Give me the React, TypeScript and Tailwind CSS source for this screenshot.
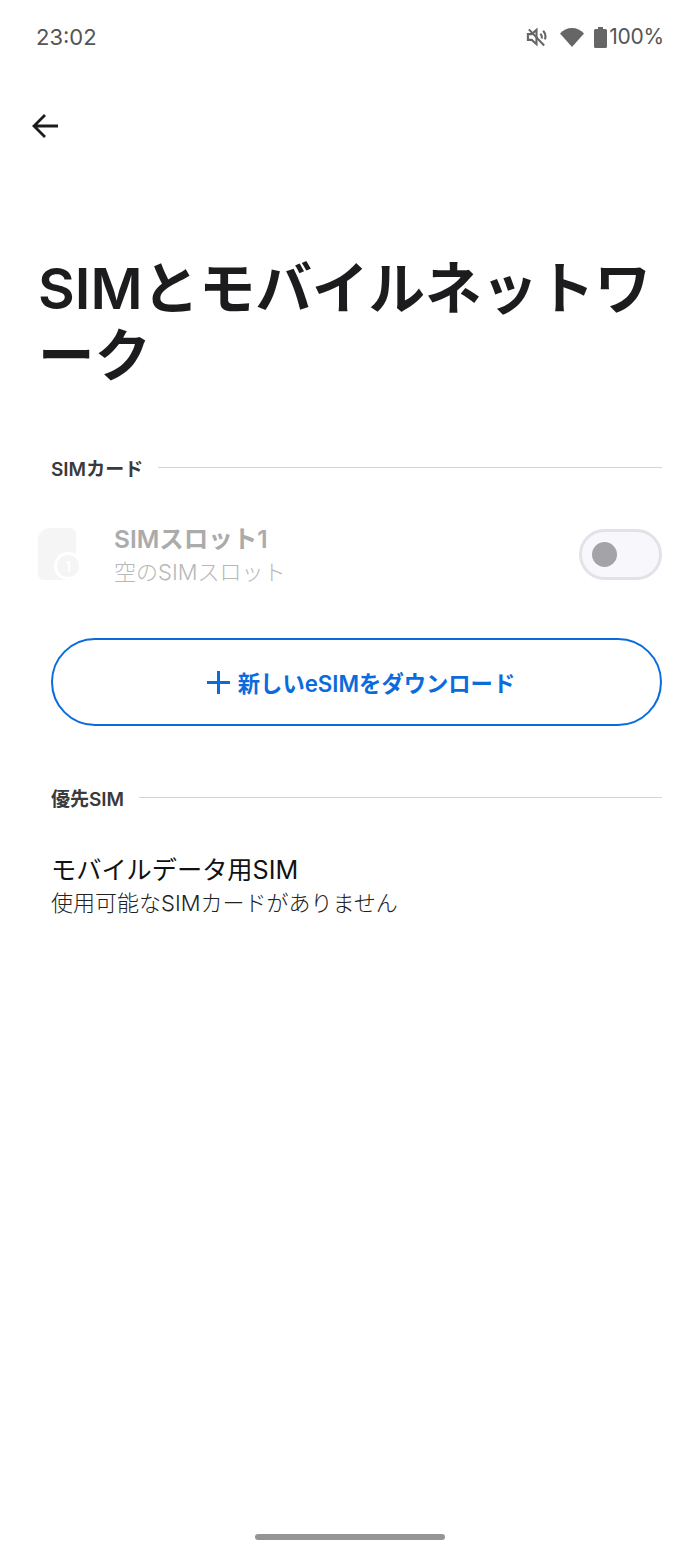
const jp = "font-['Inter','Noto_Sans_CJK_JP',sans-serif]";

function SectionHeader({ label }: { label: string }) {
  return (
    <div className="flex items-center gap-[15px] pl-[51px] pr-[38px] h-[24px]">
      <span className="text-[19px] leading-[24px] font-semibold text-[#3a3a3c] whitespace-nowrap translate-y-[1px]">{label}</span>
      <div className="flex-1 h-px bg-[#d4d4d6] -mt-[4px]" />
    </div>
  );
}

export default function App() {
  return (
    <div className={`${jp} relative w-[700px] h-[1556px] bg-white overflow-hidden`}>
      {/* status bar */}
      <div className="flex items-center justify-between pl-[36px] pr-[36px] h-[74px]">
        <span className="text-[22px] text-[#555]">23:02</span>
        <div className="flex items-center">
          <svg width="21" height="22" viewBox="0 0 22 22" fill="none" stroke="#666" strokeWidth="2.2">
            <path d="M2 8v6h4l5 4.500V3.500L6 8z" fill="#fff" />
            <path d="M15 7.500a5 5 0 0 1 1.400 5M18 4.500a9 9 0 0 1 1.800 9" />
            <path d="M3 3l16 17" />
          </svg>
          <svg className="ml-[13px]" width="24" height="20" viewBox="0 0 24 20">
            <path d="M0 6.500C3 3 7.500 1 12 1s9 2 12 5.500L12 20z" fill="#666" />
          </svg>
          <svg className="ml-[10px]" width="13" height="21" viewBox="0 0 13 21">
            <path d="M4 0h5v2h2.500A1.500 1.500 0 0 1 13 3.500V19.500A1.500 1.500 0 0 1 11.500 21h-10A1.500 1.500 0 0 1 0 19.500V3.500A1.500 1.500 0 0 1 1.500 2H4z" fill="#666" />
          </svg>
          <span className="ml-[2px] text-[21px] text-[#555] tracking-[-0.2px]">100%</span>
        </div>
      </div>

      {/* back */}
      <div className="pl-[32px] pt-[39px] h-[100px]">
        <svg width="26" height="26" viewBox="0 0 26 26" fill="none" stroke="#1c1c1e" strokeWidth="2.800">
          <path d="M26 13H2M13 2L2 13l11 11" />
        </svg>
      </div>

      <h1 className="pl-[38px] pr-[30px] mt-[81px] text-[56.500px] leading-[67px] font-semibold text-[#1c1c1e]">
        SIMとモバイルネットワーク
      </h1>

      <div className="mt-[68px]">
        <SectionHeader label="SIMカード" />
      </div>

      {/* sim slot row */}
      <div className="flex items-center pl-[38px] pr-[38px] mt-[47px] h-[52px]">
        <div className="relative w-[42px] h-[52px]">
          <div className="w-[38px] h-[52px] bg-[#f5f5f5] rounded-tr-[6px] rounded-b-[6px] rounded-tl-[12px]" />
          <div className="absolute left-[16px] top-[24px] w-[28px] h-[28px] rounded-full bg-white flex items-center justify-center">
            <div className="w-[22px] h-[22px] rounded-full bg-[#f5f5f5] flex items-center justify-center text-[14px] font-bold text-white">1</div>
          </div>
        </div>
        <div className="ml-[34px] flex-1 translate-y-[1px]">
          <div className="text-[24.500px] leading-[32px] font-semibold text-[#ababab]">SIMスロット1</div>
          <div className="text-[22px] leading-[30px] font-light text-[#b8b8b8] mt-[2px]">空のSIMスロット</div>
        </div>
        <div className="w-[83px] h-[51px] rounded-full border-[3px] border-[#e2e2e8] bg-[#f8f7fc] flex items-center pl-[10px]">
          <div className="w-[25px] h-[25px] rounded-full bg-[#a3a3a8]" />
        </div>
      </div>

      {/* download */}
      <div className="ml-[51px] mr-[38px] mt-[58px] h-[88px] rounded-full border-2 border-[#0a6cdc] flex items-center justify-center gap-[7px] pl-[8px] text-[#0a6cdc]">
        <svg width="25" height="25" viewBox="0 0 25 25" stroke="#0a6cdc" strokeWidth="3">
          <path d="M12.500 1v23M1 12.500h23" />
        </svg>
        <span className="text-[22.300px] font-semibold translate-y-[2px]">新しいeSIMをダウンロード</span>
      </div>

      <div className="mt-[61px]">
        <SectionHeader label="優先SIM" />
      </div>

      <div className="pl-[51px] mt-[43px]">
        <div className="text-[25.200px] leading-[32px] text-[#111]">モバイルデータ用SIM</div>
        <div className="text-[22px] leading-[32px] font-light text-[#222] mt-[1px]">使用可能なSIMカードがありません</div>
      </div>

      {/* gesture bar */}
      <div className="absolute left-[255px] top-[1534px] w-[190px] h-[6px] rounded-full bg-[#959595]" />
    </div>
  );
}
